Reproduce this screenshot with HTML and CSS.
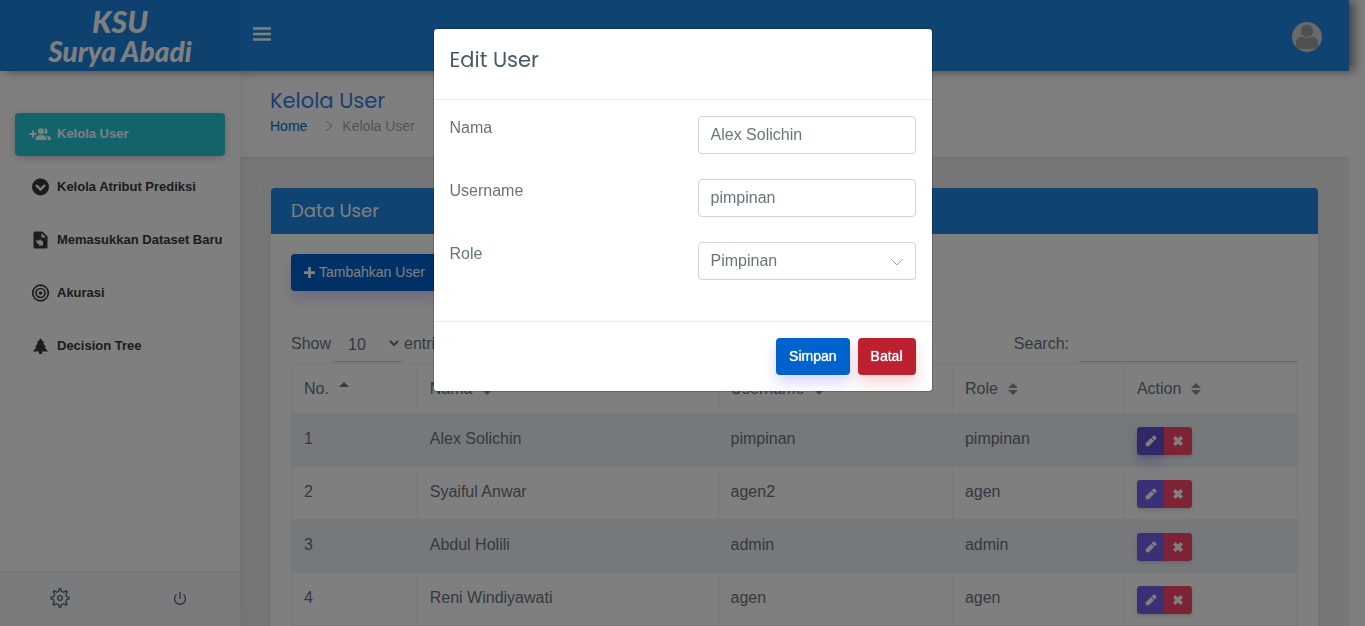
FILE: index.html
```html
<!DOCTYPE html>
<html lang="id">
<head>
<meta charset="utf-8">
<title>Kelola User</title>
<link rel="stylesheet" href="styles.css">
</head>
<body>
<svg class="sprite" aria-hidden="true">
  <symbol id="pencil" viewBox="0 0 12 12"><path d="M.8 8.200 6 3 9 6l-5.200 5.200H.8z"/><path d="M6.600 2.400 8.300.7q.7-.5 1.400 0l1.600 1.600q.5.700 0 1.400L9.600 5.400z"/></symbol>
  <symbol id="cross" viewBox="0 0 12 12"><path d="M3.500 1 6 3.500 8.500 1 11 3.500 8.500 6 11 8.500 8.500 11 6 8.500 3.500 11 1 8.500 3.500 6 1 3.500z"/></symbol>
  <symbol id="sort" viewBox="0 0 10 14"><path d="M5 1l5 5H0zM0 8h10l-5 5z"/></symbol>
  <symbol id="sort-up" viewBox="0 0 10 14"><path d="M5 1l5 5H0z"/></symbol>
</svg>
<div class="page">
  <header class="topbar">
    <a class="brand" href="#"><span>KSU</span><span>Surya Abadi</span></a>
    <button class="menu-toggle" type="button" aria-label="Menu"><svg viewBox="0 0 18 14"><path d="M0 1.500h18M0 7h18M0 12.500h18" stroke="currentColor" stroke-width="2.400"/></svg></button>
    <button class="avatar" type="button" aria-label="Profil"><svg viewBox="0 0 30 30"><circle cx="15" cy="15" r="15" fill="#d2d2d2"/><path d="M4 25V22q0-7 6-7.500 5 3 10 0 6 .5 6 7.500v3q-1 2-4 2H8q-3 0-4-2z" fill="#a0a0a0"/><circle cx="15" cy="9" r="6.500" fill="#a0a0a0" stroke="#d2d2d2"/></svg></button>
  </header>
  <div class="columns">
    <aside class="sidebar">
      <nav class="menu">
        <a class="menu-item active" href="#"><svg viewBox="0 0 22 18"><path d="M3 5.500h2v2.500h2.500v2H5v2.500H3V10H.5V8H3z"/><circle cx="12" cy="6.200" r="3"/><path d="M6.500 15v-2q1-3 5.500-3t5.500 3v2zM15.500 3.200q3 0 3 3t-3 3q1-3 0-6zM17.500 10.500q4.500.5 4.500 3V15h-3.200q.5-3-1.300-4.500z"/></svg>Kelola User</a>
        <a class="menu-item" href="#"><svg viewBox="0 0 22 18"><circle cx="11.500" cy="9" r="8.500"/><path d="M7 7l4.500 4.500L16 7" fill="none" stroke="#fff" stroke-width="2.400"/></svg>Kelola Atribut Prediksi</a>
        <a class="menu-item" href="#"><svg viewBox="0 0 22 18"><path d="M6 .5H13.500l5 5v11q0 1-1 1H6q-1.500 0-1.500-1V2Q4.500.5 6 .5z"/><path d="M12.500 2v4.500H17zM7.500 8.500l2 1.500 1.500-2 1.500 2h1.500v4.500H9.500L10 13 7.500 12z" fill="#fff"/></svg>Memasukkan Dataset Baru</a>
        <a class="menu-item" href="#"><svg viewBox="0 0 22 18"><g fill="none" stroke="currentColor" stroke-width="1.700"><circle cx="11.500" cy="9" r="7.800"/><circle cx="11.500" cy="9" r="4.500"/></g><circle cx="11.500" cy="9" r="1.800"/></svg>Akurasi</a>
        <a class="menu-item" href="#"><svg viewBox="0 0 22 18"><path d="M11.500 1.500l4 4.500H14l3 4h-1.500l3.500 4.500h-6V17h-3v-2.500H4L7.500 10H6l3-4H7.500z"/></svg>Decision Tree</a>
      </nav>
      <footer class="sidebar-footer">
        <button type="button" aria-label="Pengaturan"><svg viewBox="0 0 20 20"><g class="outline"><path d="M8.700 3.300 9.100 1h1.800l.4 2.300 2.500 1 2.100-1.600 1.400 1.400-1.600 2.100 1 2.500 2.300.4v1.800l-2.300.4-1 2.500 1.600 2.100-1.400 1.400-2.100-1.600-2.500 1-.4 2.300H9.100l-.4-2.300-2.500-1-2.100 1.600-1.400-1.400 1.600-2.100-1-2.500L1 10.900V9.100l2.700-.4 1-2.500-1.600-2.100 1.400-1.400 2.100 1.600z"/><circle cx="10" cy="10" r="2.300"/></g></svg></button>
        <button type="button" aria-label="Keluar"><svg viewBox="0 0 20 20"><path class="outline" d="M6.500 6.500a5.500 5.500 0 1 0 7 0M10 4v7"/></svg></button>
      </footer>
    </aside>
    <main class="content">
      <section class="page-title">
        <h1>Kelola User</h1>
        <nav class="breadcrumb"><a href="#">Home</a><svg viewBox="0 0 8 12"><path d="M1 1l6 5-6 5" fill="none" stroke="currentColor"/></svg><span>Kelola User</span></nav>
      </section>
      <section class="card">
        <h2>Data User</h2>
        <div class="card-body">
          <button class="btn btn-primary" type="button"><svg viewBox="0 0 12 12"><path d="M4.500 0h3v4.500H12v3H7.500V12h-3V7.500H0v-3h4.500z"/></svg>Tambahkan User</button>
          <div class="table-tools">
            <label>Show <select class="line-field"><option>10</option><option>25</option></select> entries</label>
            <label>Search: <input class="line-field search" type="search"></label>
          </div>
          <table>
            <colgroup><col class="c-no"><col class="c-name"><col class="c-user"><col class="c-role"><col class="c-action"></colgroup>
            <thead><tr>
              <th>No.<svg class="on"><use href="#sort-up"/></svg></th>
              <th>Nama<svg><use href="#sort"/></svg></th>
              <th>Username<svg><use href="#sort"/></svg></th>
              <th>Role<svg><use href="#sort"/></svg></th>
              <th>Action<svg><use href="#sort"/></svg></th>
            </tr></thead>
            <tbody>
              <tr><td>1</td><td>Alex Solichin</td><td>pimpinan</td><td>pimpinan</td><td><div class="actions"><button class="edit focused" type="button" aria-label="Edit"><svg><use href="#pencil"/></svg></button><button class="delete" type="button" aria-label="Hapus"><svg><use href="#cross"/></svg></button></div></td></tr>
              <tr><td>2</td><td>Syaiful Anwar</td><td>agen2</td><td>agen</td><td><div class="actions"><button class="edit" type="button" aria-label="Edit"><svg><use href="#pencil"/></svg></button><button class="delete" type="button" aria-label="Hapus"><svg><use href="#cross"/></svg></button></div></td></tr>
              <tr><td>3</td><td>Abdul Holili</td><td>admin</td><td>admin</td><td><div class="actions"><button class="edit" type="button" aria-label="Edit"><svg><use href="#pencil"/></svg></button><button class="delete" type="button" aria-label="Hapus"><svg><use href="#cross"/></svg></button></div></td></tr>
              <tr><td>4</td><td>Reni Windiyawati</td><td>agen</td><td>agen</td><td><div class="actions"><button class="edit" type="button" aria-label="Edit"><svg><use href="#pencil"/></svg></button><button class="delete" type="button" aria-label="Hapus"><svg><use href="#cross"/></svg></button></div></td></tr>
            </tbody>
          </table>
        </div>
      </section>
    </main>
  </div>
</div>
<div class="backdrop">
  <form class="modal" role="dialog" aria-labelledby="modal-title">
    <header><h2 id="modal-title">Edit User</h2></header>
    <div class="modal-body">
      <div class="field"><label for="nama">Nama</label><input id="nama" type="text" value="Alex Solichin"></div>
      <div class="field"><label for="username">Username</label><input id="username" type="text" value="pimpinan"></div>
      <div class="field"><label for="role">Role</label><div class="select-wrap"><select id="role"><option>Pimpinan</option><option>Admin</option><option>Agen</option></select><svg viewBox="0 0 12 8"><path d="M0 1l6 6 6-6" fill="none" stroke="currentColor"/></svg></div></div>
    </div>
    <footer><button class="btn btn-primary" type="submit">Simpan</button><button class="btn btn-danger" type="button">Batal</button></footer>
  </form>
</div>
</body>
</html>
```

FILE: styles.css
```css
*, *::before, *::after { box-sizing: border-box; }
body {
  margin: 0;
  padding-right: 16px;
  height: 100vh;
  overflow: hidden;
  background: #fff;
  color: #67757c;
  font: 16px/24px "Liberation Sans", Arial, sans-serif;
}
button, input, select { font: inherit; color: inherit; }
button { cursor: pointer; }
a { text-decoration: none; }
h1, h2 { margin: 0; font-family: Poppins, Inter, sans-serif; font-weight: 400; }
svg { fill: currentColor; }
.outline { fill: none; stroke: currentColor; stroke-width: 1.3; }
.sprite { position: absolute; width: 0; height: 0; }

.page { display: flex; flex-direction: column; height: 100vh; }

/* Top bar */
.topbar {
  position: relative;
  z-index: 3;
  display: flex;
  align-items: center;
  flex: none;
  height: 71px;
  padding-right: 27px;
  background: #1e88e5;
  color: #fff;
  box-shadow: 5px 0 10px rgba(0, 0, 0, .5);
}
.brand {
  display: flex;
  flex-direction: column;
  align-items: center;
  width: 240px;
  height: 100%;
  padding-top: 5px;
  background: rgba(0, 0, 0, .04);
  color: #fff;
  font: italic 900 28px/28px Forte, Lato, sans-serif;
}
.brand span:first-child { font-size: 30px; line-height: 32px; }
.menu-toggle, .avatar { display: flex; padding: 0; border: 0; background: none; }
.menu-toggle { margin: 0 auto 3px 13px; }
.menu-toggle svg { width: 18px; height: 14px; }
.avatar { margin-top: 3px; }
.avatar svg { width: 30px; height: 30px; }

.columns { display: flex; flex: 1; min-height: 0; }

/* Sidebar */
.sidebar {
  position: relative;
  z-index: 2;
  display: flex;
  flex: none;
  flex-direction: column;
  width: 240px;
  background: #fff;
  box-shadow: 1px 0 20px rgba(0, 0, 0, .08);
}
.menu { display: flex; flex: 1; flex-direction: column; gap: 10px; padding: 42px 15px 0; }
.menu-item {
  display: flex;
  align-items: center;
  gap: 6px;
  height: 43px;
  padding: 0 0 1px 14px;
  border-radius: 4px;
  color: #383838;
  font-size: 13px;
  font-weight: 700;
  white-space: nowrap;
}
.menu-item svg { flex: none; width: 22px; height: 18px; }
.menu-item.active { background: #26c6da; color: #fff; box-shadow: 0 2px 8px rgba(0, 0, 0, .2); }
.sidebar-footer {
  display: flex;
  height: 55px;
  border-top: 1px solid #dfe5e9;
  background: #f2f6f8;
}
.sidebar-footer button {
  display: flex;
  flex: 1;
  align-items: center;
  justify-content: center;
  padding: 0 0 2px;
  border: 0;
  background: none;
}
.sidebar-footer svg { width: 20px; height: 20px; color: #54666f; }

/* Content */
.content { flex: 1; overflow: hidden; background: #eee; }
.page-title {
  padding: 16px 30px 20px;
  background: #fff;
  box-shadow: 1px 0 5px rgba(0, 0, 0, .1);
}
.page-title h1 { color: #2f80e7; font-size: 21px; line-height: 28px; }
.breadcrumb { display: flex; align-items: center; height: 22px; color: #99abb4; font-size: 14px; }
.breadcrumb a { color: #0268d0; }
.breadcrumb svg { width: 8px; height: 12px; margin: 0 9px 0 18px; }
.card {
  margin: 31px 31px 30px;
  border-radius: 4px;
  background: #fff;
  box-shadow: 0 5px 20px rgba(0, 0, 0, .05);
}
.card h2 {
  padding: 11px 20px;
  border-radius: 4px 4px 0 0;
  background: #1e88e5;
  color: #fff;
  font-size: 18px;
  line-height: 24px;
}
.card-body { padding: 20px; }
.btn {
  height: 37px;
  padding: 0 13px 2px;
  border: 0;
  border-radius: 4px;
  color: #fff;
  font-size: 14px;
  white-space: nowrap;
}
.btn svg { width: 11px; height: 11px; margin-right: 4px; vertical-align: -1px; }
.btn-primary { background: #0062cc; box-shadow: 0 8px 14px rgba(116, 96, 238, .25); }
.btn-danger { background: #bd2130; box-shadow: 0 8px 14px rgba(239, 83, 80, .25); }

.table-tools { display: flex; justify-content: space-between; height: 38px; margin: 33px 0 1px; line-height: 40px; }
.table-tools label { display: flex; }
.line-field {
  width: 70px;
  height: 38px;
  padding: 3px 0 0 12px;
  border: 0;
  border-bottom: 1px solid #ccc;
  border-radius: 0;
  background: none;
  margin: 0 2px 0 1px;
  outline: none;
}
.line-field.search { width: 219px; margin: 0 0 0 10px; }

table { width: 100%; table-layout: fixed; border-collapse: collapse; }
.c-no { width: 12.5%; }
.c-name { width: 29.9%; }
.c-user { width: 23.3%; }
.c-role { width: 17.1%; }
.c-action { width: 17.2%; }
th, td { padding: 13px 12px 11px; border: 1px solid #edf1f5; text-align: left; font-weight: 400; vertical-align: top; }
th { height: 50px; }
td { height: 53px; }
th svg { width: 10px; height: 14px; margin-left: 10px; vertical-align: -2px; color: #8b9398; }
th svg.on { vertical-align: -1px; color: #67757c; }
tbody tr:nth-child(odd) { background: #edf3f7; }
.actions { display: flex; width: 55px; border-radius: 3px; box-shadow: 0 2px 4px rgba(0, 0, 0, .15); }
.actions button {
  display: flex;
  flex: 1;
  align-items: center;
  justify-content: center;
  height: 28px;
  padding: 0;
  border: 0;
  color: #fff;
}
.actions svg { width: 12px; height: 12px; }
.edit { border-radius: 3px 0 0 3px; background: #7460ee; }
.edit.focused { background: #6352ce; box-shadow: 0 8px 14px rgba(116, 96, 238, .3); }
.delete { border-radius: 0 3px 3px 0; background: #fa466a; }

/* Dialog */
.backdrop { position: fixed; inset: 0; z-index: 10; padding-top: 28px; background: rgba(0, 0, 0, .5); }
.modal {
  width: 100%;
  max-width: 500px;
  margin: 0 auto;
  border: 1px solid rgba(0, 0, 0, .2);
  border-radius: 4px;
  background: #fff;
  background-clip: padding-box;
}
.modal header { padding: 16px 16px 24px; border-bottom: 1px solid #e9ecef; }
.modal h2 { color: #455a64; font-size: 21px; line-height: 30px; }
.modal-body { display: grid; gap: 25px; padding: 16px 16px 41px; }
.field { display: flex; justify-content: space-between; }
.field input, .field select {
  width: 218px;
  height: 38px;
  padding: 0 12px;
  border: 1px solid #ced4da;
  border-radius: 4px;
  background: #fff;
  outline: none;
}
.field select { appearance: none; }
.select-wrap { position: relative; }
.select-wrap svg { position: absolute; top: 16px; right: 13px; width: 12px; height: 8px; color: #aaa; pointer-events: none; }
.modal footer { display: flex; justify-content: flex-end; gap: 8px; padding: 16px; border-top: 1px solid #e9ecef; }
.modal .btn { text-shadow: 0 0 1px #fff; }
```
